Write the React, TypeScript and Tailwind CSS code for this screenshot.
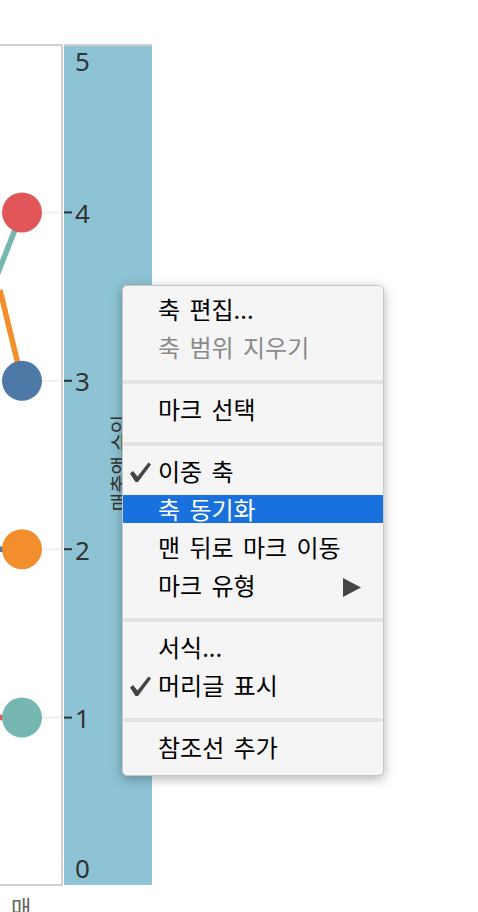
import React from "react";

const Check = () => (
  <svg width="24" height="22" viewBox="0 0 24 22" className="absolute left-[5px] top-[4px]">
    <path d="M2 12.5 L5 10 L9.5 15.5 L20.5 1.5 L23 3.5 L10 21 L7.5 21 Z" fill="#444" />
  </svg>
);

type ItemProps = { label: string; gray?: boolean; checked?: boolean; active?: boolean; arrow?: boolean; gapTop?: boolean };

const Item = ({ label, gray, checked, active, arrow, gapTop }: ItemProps) => (
  <div
    className={
      "relative h-[28px] pl-[35px] leading-[28px] whitespace-nowrap [word-spacing:4px] " +
      (gapTop ? "mt-[10px] " : "") +
      (active ? "bg-[#1871dc] text-white " : gray ? "text-[#8a8a8a] " : "text-black ")
    }
  >
    {checked && <Check />}
    {label}
    {arrow && (
      <svg width="18" height="19" viewBox="0 0 18 19" className="absolute left-[220px] top-[7px]">
        <polygon points="0,0 18,9.5 0,19" fill="#444" />
      </svg>
    )}
  </div>
);

const Sep = () => (
  <div className="pt-[19px] pb-[11px]">
    <div className="h-[4px] bg-[#e3e3e3]" />
  </div>
);

export default function App() {
  return (
    <div className="relative w-[478px] h-[912px] bg-white overflow-hidden" style={{ fontFamily: "'Noto Sans', 'Noto Sans CJK KR', sans-serif" }}>
      <div className="pt-[44px] flex">
        {/* plot pane */}
        <div className="relative w-[63px] h-[842px] border-t-2 border-r-2 border-b-2 border-[#d0d0d0]">
          <svg width="61" height="838" className="absolute left-0 top-0 overflow-hidden">
            {[166.4, 334.8, 503.2, 671.6].map((y) => (
              <line key={y} x1="0" x2="61" y1={y} y2={y} stroke="#efefef" strokeWidth="2" />
            ))}
            <line x1="22" y1="166" x2="-8" y2="242" stroke="#76b7b2" strokeWidth="5.5" />
            <line x1="0" y1="244" x2="22" y2="334.8" stroke="#f28e2b" strokeWidth="5.5" />
            <line x1="-20" y1="503.2" x2="22" y2="503.2" stroke="#4e79a7" strokeWidth="5.5" />
            <line x1="-20" y1="671.6" x2="22" y2="671.6" stroke="#e15759" strokeWidth="5.5" />
            <circle cx="22" cy="166.4" r="20" fill="#e15759" />
            <circle cx="22" cy="334.8" r="20" fill="#4e79a7" />
            <circle cx="22" cy="503.2" r="20" fill="#f28e2b" />
            <circle cx="22" cy="671.6" r="20" fill="#76b7b2" />
          </svg>
        </div>
        {/* axis pane */}
        <div className="relative ml-[1px] w-[88px] h-[841px] border-t-2 border-[#d0d0d0] bg-[#8dc3d4] text-[#333]">
          <svg width="10" height="839" className="absolute left-0 top-0">
            {[166.4, 334.8, 503.2, 671.6].map((y) => (
              <line key={y} x1="0" x2="8" y1={y} y2={y} stroke="#333" strokeWidth="2" />
            ))}
          </svg>
          <div className="absolute left-[11px] top-[15px] -translate-y-1/2 text-[26px] leading-none">5</div>
          <div className="absolute left-[11px] top-[167px] -translate-y-1/2 text-[26px] leading-none">4</div>
          <div className="absolute left-[11px] top-[335px] -translate-y-1/2 text-[26px] leading-none">3</div>
          <div className="absolute left-[11px] top-[504px] -translate-y-1/2 text-[26px] leading-none">2</div>
          <div className="absolute left-[11px] top-[672px] -translate-y-1/2 text-[26px] leading-none">1</div>
          <div className="absolute left-[11px] top-[822px] -translate-y-1/2 text-[26px] leading-none">0</div>
          <div
            className="absolute left-[56px] top-[417px] -translate-x-1/2 -translate-y-1/2 -rotate-90 whitespace-nowrap text-[20px] leading-none text-[#333]"
            style={{ fontFamily: "'Noto Sans CJK KR', sans-serif" }}
          >
            매출액 수익
          </div>
        </div>
      </div>
      <div className="pl-[11px] pt-[9px] text-[22px] leading-none text-[#666]" style={{ fontFamily: "'Noto Sans CJK KR', sans-serif" }}>
        매
      </div>

      {/* context menu */}
      <div
        className="absolute left-[122px] top-[285px] w-[262px] flex flex-col pt-[9px] pb-[14px] bg-[#f5f5f5] border border-[#c8c8c8] rounded-[5px] shadow-[0_3px_12px_rgba(0,0,0,0.3)] text-[24px]"
        style={{ fontFamily: "'Noto Sans CJK KR', sans-serif" }}
      >
        <Item label="축 편집..." />
        <Item label="축 범위 지우기" gray gapTop />
        <Sep />
        <Item label="마크 선택" />
        <Sep />
        <Item label="이중 축" checked />
        <Item label="축 동기화" active gapTop />
        <Item label="맨 뒤로 마크 이동" gapTop />
        <Item label="마크 유형" arrow gapTop />
        <Sep />
        <Item label="서식..." />
        <Item label="머리글 표시" checked gapTop />
        <Sep />
        <Item label="참조선 추가" />
      </div>
    </div>
  );
}
